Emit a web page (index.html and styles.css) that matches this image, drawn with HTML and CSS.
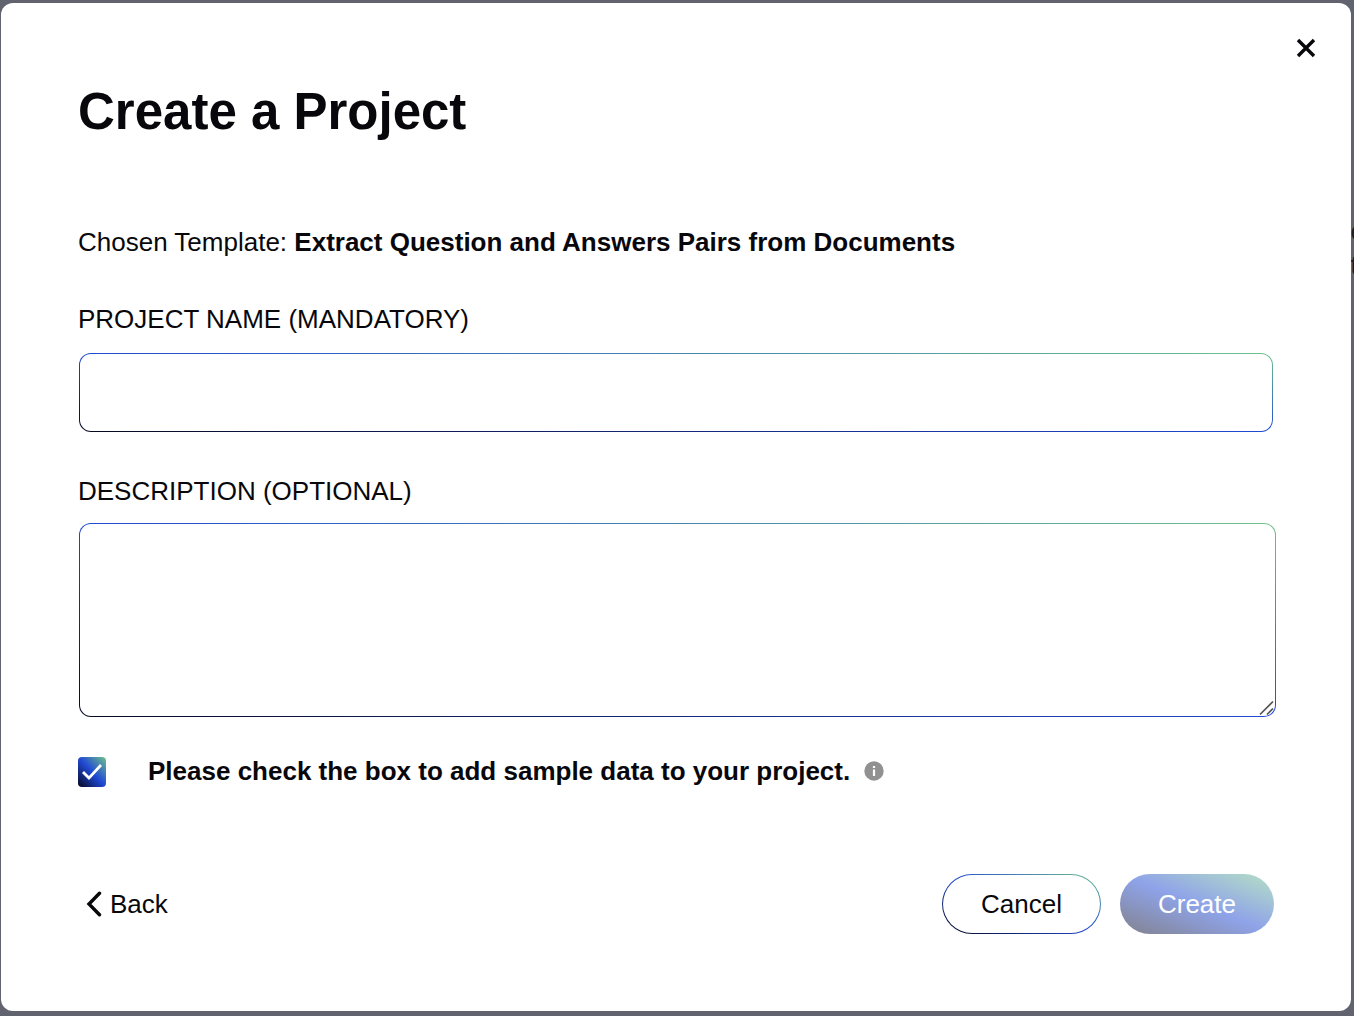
FILE: index.html
```html
<!DOCTYPE html>
<html lang="en">
<head>
<meta charset="utf-8">
<meta name="viewport" content="width=device-width, initial-scale=1">
<title>Create a Project</title>
<link rel="stylesheet" href="styles.css">
</head>
<body>
<div class="backdrop-text" aria-hidden="true">e<br>t</div>
<main class="dialog" role="dialog" aria-labelledby="dialog-title">
  <header class="dialog-top">
    <button class="close" type="button" aria-label="Close">
      <svg width="20" height="20" viewBox="0 0 20 20" fill="none" stroke="currentColor" stroke-width="3.4"><path d="M2 2L18 18M18 2L2 18"/></svg>
    </button>
  </header>
  <form class="form">
    <h1 class="title" id="dialog-title">Create a Project</h1>
    <p class="template">Chosen Template: <strong>Extract Question and Answers Pairs from Documents</strong></p>
    <label class="label" for="name">PROJECT NAME (MANDATORY)</label>
    <input class="field name-field" id="name" type="text">
    <label class="label" for="description">DESCRIPTION (OPTIONAL)</label>
    <div class="area">
      <textarea class="field description-field" id="description"></textarea>
      <svg class="grip" width="16" height="16" viewBox="0 0 16 16" fill="none" stroke="#555" stroke-width="1.7"><path d="M1 14.5L14 1.5M8 14.5L14 8.5"/></svg>
    </div>
    <div class="sample">
      <input class="check" id="sample" type="checkbox" checked>
      <label class="sample-label" for="sample">Please check the box to add sample data to your project.</label>
      <svg class="info" width="20" height="20" viewBox="0 0 20 20"><circle cx="10" cy="10" r="9.7" fill="#919191"/><path d="M8.9 5h2.2v2H8.9zM8.9 8.6h2.2V15H8.9z" fill="#fff"/></svg>
    </div>
    <footer class="actions">
      <button class="back" type="button">
        <svg width="16" height="26" viewBox="0 0 16 26" fill="none" stroke="currentColor" stroke-width="3.4" stroke-linecap="round"><path d="M13.5 2.2L3 13L13.5 23.8"/></svg>
        Back
      </button>
      <button class="button cancel" type="button">Cancel</button>
      <button class="button create" type="submit" disabled>Create</button>
    </footer>
  </form>
</main>
</body>
</html>
```
FILE: styles.css
```css
* {
  box-sizing: border-box;
}

:root {
  --brand: linear-gradient(to top right, #07071f 0%, #2049d4 50%, #6fc28c 100%);
}

body {
  margin: 0;
  min-height: 100vh;
  padding: 3px 3px 5px 1px;
  display: flex;
  background: #61646e;
  color: #08080c;
  font: 26px/32px "Liberation Sans", Arial, sans-serif;
  overflow-x: hidden;
}

.backdrop-text {
  position: absolute;
  top: 214px;
  right: -11px;
  line-height: 34px;
  color: #1b1d2b;
}

.dialog {
  position: relative;
  flex: 1;
  background: #fff;
  border-radius: 12px;
}

.dialog-top {
  display: flex;
  justify-content: flex-end;
  padding: 35px 35px 0;
}

.close {
  display: block;
  padding: 0;
  border: 0;
  background: none;
  color: inherit;
}

.close svg {
  display: block;
}

.form {
  display: flex;
  flex-direction: column;
  padding: 26px 77px 75px;
}

.title {
  margin: 0 0 86px;
  font-size: 51px;
  line-height: 56px;
}

.template {
  margin: 0 0 45px;
}

.label {
  margin-bottom: 18px;
}

.field {
  display: block;
  width: 100%;
  margin: 0;
  padding: 16px;
  border: 1px solid transparent;
  border-radius: 12px;
  background: linear-gradient(#fff, #fff) padding-box, var(--brand) border-box;
  color: inherit;
  font: inherit;
  outline: 0;
}

.name-field {
  height: 79px;
  margin: 0 0 43px 1px;
  width: calc(100% - 2px);
}

.area {
  position: relative;
  margin: -2px -2px 40px 1px;
}

.description-field {
  height: 194px;
  resize: none;
}

.grip {
  position: absolute;
  right: 1px;
  bottom: 1px;
}

.sample {
  display: flex;
  align-items: flex-start;
  font-weight: bold;
}

.sample-label {
  line-height: 28px;
}

.check {
  appearance: none;
  width: 28px;
  height: 30px;
  margin: 0 42px 0 0;
  border-radius: 4px;
  background: var(--brand);
  display: grid;
  place-items: center;
}

.check:checked::before {
  content: "";
  width: 20px;
  height: 16px;
  background: #fff;
  clip-path: polygon(0 9px, 2px 7px, 7px 12px, 18px 0, 20px 2px, 7px 16px);
}

.info {
  margin: 4px 0 0 14px;
}

.actions {
  display: flex;
  align-items: center;
  margin-top: 87px;
}

.back {
  display: flex;
  align-items: center;
  gap: 8px;
  margin-right: auto;
  padding: 0 8px;
  border: 0;
  background: none;
  color: inherit;
  font: inherit;
}

.button {
  height: 60px;
  padding: 0 38px;
  border: 1px solid transparent;
  border-radius: 30px;
  font: inherit;
}

.cancel {
  background: linear-gradient(#fff, #fff) padding-box, var(--brand) border-box;
  color: inherit;
}

.create {
  margin-left: 19px;
  border: 0;
  background: var(--brand);
  color: #fff;
  opacity: 0.5;
}
```
